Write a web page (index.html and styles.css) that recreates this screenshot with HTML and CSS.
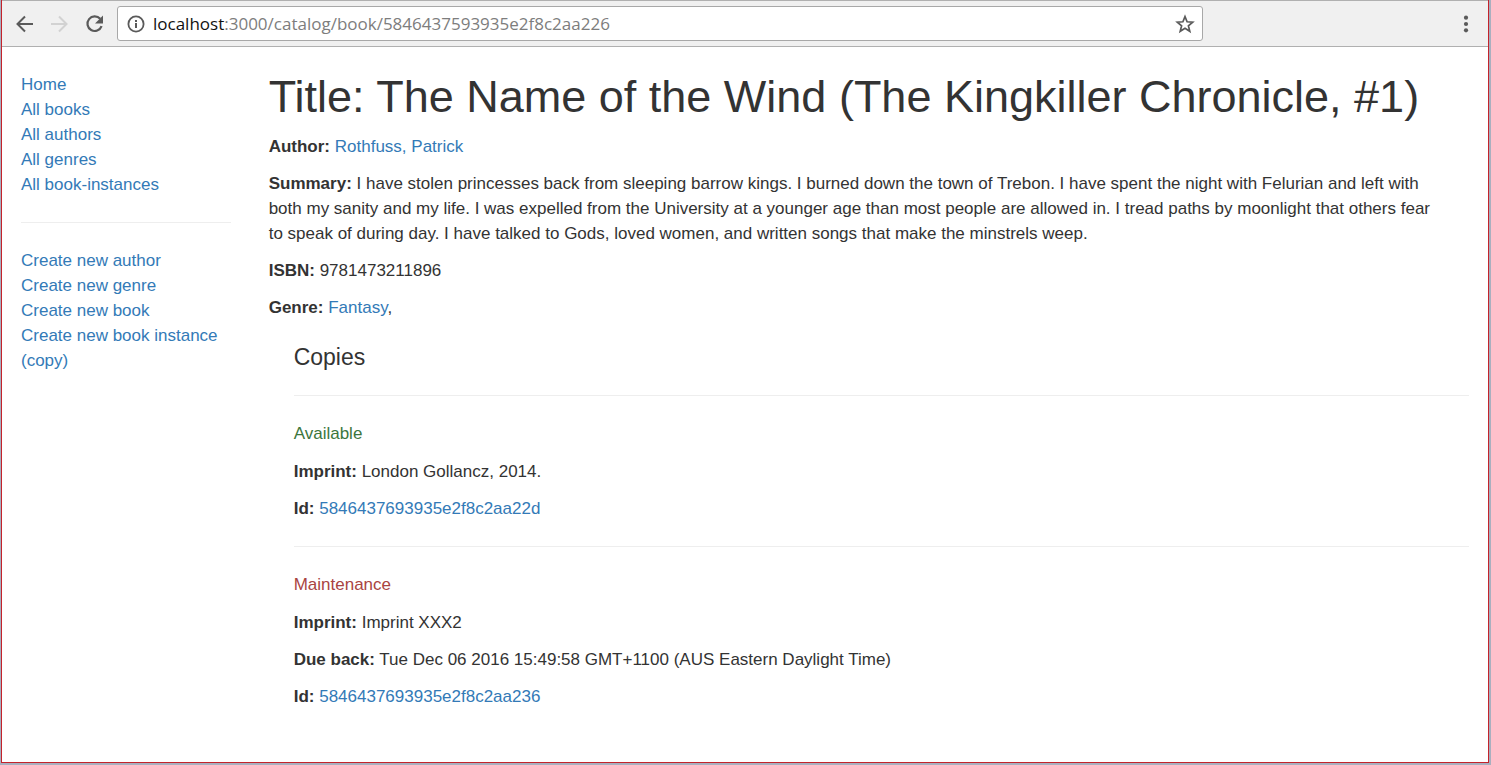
FILE: index.html
```html
<!DOCTYPE html>
<html lang="en">
<head>
<meta charset="utf-8">
<title>Book Detail</title>
<link rel="stylesheet" href="styles.css">
</head>
<body>
<div class="window">
  <header class="toolbar">
    <button class="tool" type="button" aria-label="Back"><svg width="24" height="24" viewBox="0 0 24 24"><path d="M21 12H6M13 4.500L5.500 12l7.500 7.500" fill="none" stroke="#5a5a5a" stroke-width="2"/></svg></button>
    <button class="tool" type="button" aria-label="Forward" disabled><svg width="24" height="24" viewBox="0 0 24 24"><path d="M4 12h15M12 4.500l7.500 7.500-7.500 7.500" fill="none" stroke="#d2d2d2" stroke-width="2"/></svg></button>
    <button class="tool" type="button" aria-label="Reload"><svg width="24" height="24" viewBox="0 0 24 24"><path d="M19.600 14.200A7.300 7.300 0 1 1 18.200 6.800" fill="none" stroke="#5a5a5a" stroke-width="2.200"/><path d="M21 3.500v8h-8z" fill="#5a5a5a"/></svg></button>
    <div class="address">
      <svg width="18" height="18" viewBox="0 0 18 18"><circle cx="9" cy="9" r="7.600" fill="none" stroke="#5a5a5a" stroke-width="1.800"/><path d="M8 8h2v5H8zM8 5h2v2H8z" fill="#5a5a5a"/></svg>
      <a class="url" href="#"><span class="host">localhost</span>:3000/catalog/book/5846437593935e2f8c2aa226</a>
      <button class="star" type="button" aria-label="Bookmark this page"><svg width="20" height="20" viewBox="0 0 20 20"><path d="M10 2.600l2.100 5.200 5.600.4-4.300 3.600 1.400 5.500L10 14.300l-4.800 3 1.400-5.500-4.300-3.600 5.600-.4z" fill="none" stroke="#5a5a5a" stroke-width="1.700"/></svg></button>
    </div>
    <button class="menu" type="button" aria-label="Menu"><svg width="6" height="18" viewBox="0 0 6 18"><g fill="#5a5a5a"><circle cx="3" cy="2.700" r="2.100"/><circle cx="3" cy="9" r="2.100"/><circle cx="3" cy="15.300" r="2.100"/></g></svg></button>
  </header>
  <div class="page">
    <nav class="sidebar">
      <ul>
        <li><a href="#">Home</a></li>
        <li><a href="#">All books</a></li>
        <li><a href="#">All authors</a></li>
        <li><a href="#">All genres</a></li>
        <li><a href="#">All book-instances</a></li>
      </ul>
      <hr>
      <ul>
        <li><a href="#">Create new author</a></li>
        <li><a href="#">Create new genre</a></li>
        <li><a href="#">Create new book</a></li>
        <li><a href="#">Create new book instance (copy)</a></li>
      </ul>
    </nav>
    <main class="content">
      <h1>Title: The Name of the Wind (The Kingkiller Chronicle, #1)</h1>
      <p><strong>Author:</strong> <a href="#">Rothfuss, Patrick</a></p>
      <p class="summary"><strong>Summary:</strong> I have stolen princesses back from sleeping barrow kings. I burned down the town of Trebon. I have spent the night with Felurian and left with both my sanity and my life. I was expelled from the University at a younger age than most people are allowed in. I tread paths by moonlight that others fear to speak of during day. I have talked to Gods, loved women, and written songs that make the minstrels weep.</p>
      <p><strong>ISBN:</strong> 9781473211896</p>
      <p><strong>Genre:</strong> <a href="#">Fantasy</a>,</p>
      <section class="copies">
        <h4>Copies</h4>
        <hr>
        <p class="status available">Available</p>
        <p><strong>Imprint:</strong> London Gollancz, 2014.</p>
        <p><strong>Id:</strong> <a href="#">5846437693935e2f8c2aa22d</a></p>
        <hr>
        <p class="status maintenance">Maintenance</p>
        <p><strong>Imprint:</strong> Imprint XXX2</p>
        <p><strong>Due back:</strong> Tue Dec 06 2016 15:49:58 GMT+1100 (AUS Eastern Daylight Time)</p>
        <p><strong>Id:</strong> <a href="#">5846437693935e2f8c2aa236</a></p>
      </section>
    </main>
  </div>
</div>
</body>
</html>
```
FILE: styles.css
```css
* { box-sizing: border-box; }

body {
  display: flex;
  min-height: 100vh;
  margin: 0;
  padding: 0 2px 2px 1px;
  background: #a9afbf;
  color: #333;
  font: 17px/25px "Liberation Sans", Arial, sans-serif;
}

.window {
  flex: 1;
  min-width: 0;
  border: 1px solid #c4232b;
  border-top: 0;
  background: #fff;
}

.toolbar {
  display: flex;
  align-items: center;
  height: 47px;
  padding-left: 10px;
  border-top: 1px solid #b0b0b0;
  border-bottom: 1px solid #b0b0b0;
  background: #f0f0f0;
}

button {
  display: flex;
  padding: 0;
  border: 0;
  background: none;
}

.tool { margin-right: 11px; }

.address {
  display: flex;
  flex: 0 1 1086px;
  align-items: center;
  height: 35px;
  padding: 0 7px 0 9px;
  border: 1px solid #a8a8a8;
  border-radius: 3px;
  background: #fff;
}

.url {
  flex: 1;
  margin-left: 8px;
  font-family: "Open Sans", "Noto Sans", sans-serif;
}

.host { color: #111; }

.menu { margin: 0 19px 0 auto; }

.page {
  display: grid;
  grid-template-columns: 1fr 5fr;
  padding-top: 25px;
}

.sidebar,
.content {
  min-width: 0;
  padding: 0 19px;
}

ul {
  margin: 0;
  padding: 0;
  list-style: none;
}

a {
  color: #337ab7;
  text-decoration: none;
}

a.url { color: #7d7d7d; }

hr {
  margin: 25px 0;
  border: 0;
  border-top: 1px solid #eee;
}

h1,
h4 {
  font-weight: 400;
}

h1 {
  margin: 0 0 12px;
  font-size: 45px;
  line-height: 50px;
}

h4 {
  margin: 25px 0;
  font-size: 23px;
  line-height: 25px;
}

p { margin: 0 0 12px; }

.summary { padding-right: 24px; }

.copies { padding-left: 25px; }

.status { margin-bottom: 13px; }

.available { color: #3c763d; }

.maintenance { color: #a94442; }
```
